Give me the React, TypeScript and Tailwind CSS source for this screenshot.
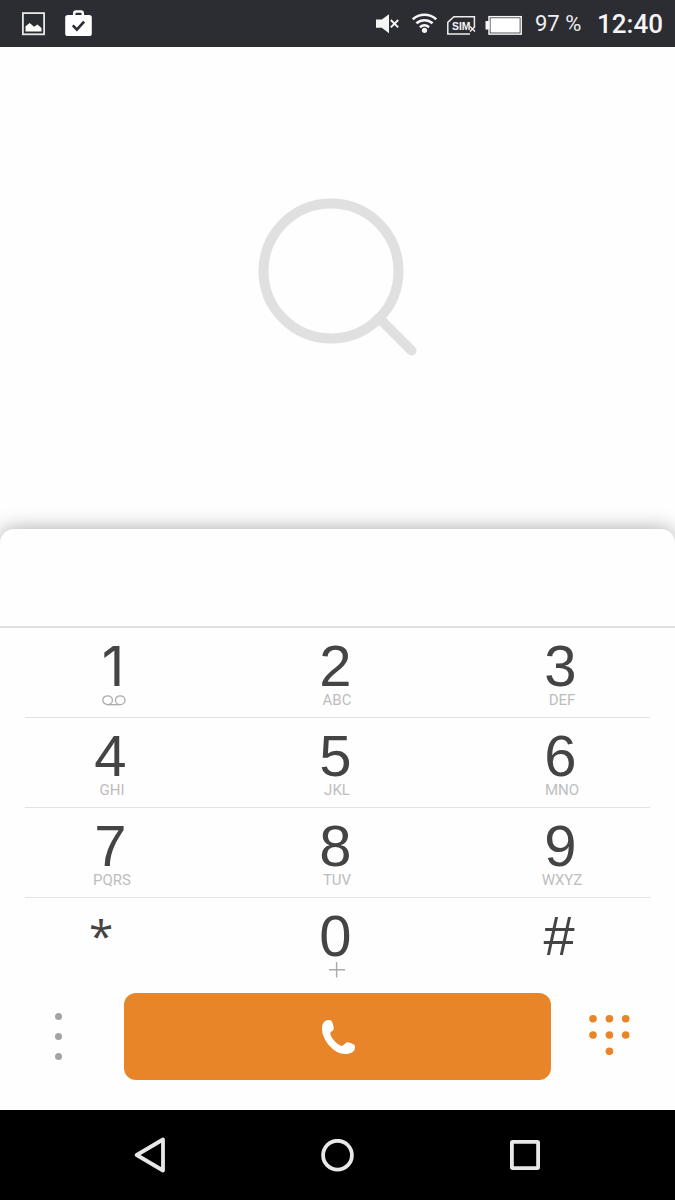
import React from 'react';

type Key = {
  digit: string;
  label?: string;
};

const rows: Key[][] = [
  [{ digit: '1' }, { digit: '2', label: 'ABC' }, { digit: '3', label: 'DEF' }],
  [{ digit: '4', label: 'GHI' }, { digit: '5', label: 'JKL' }, { digit: '6', label: 'MNO' }],
  [{ digit: '7', label: 'PQRS' }, { digit: '8', label: 'TUV' }, { digit: '9', label: 'WXYZ' }],
  [{ digit: '*' }, { digit: '0' }, { digit: '#' }],
];

const digitStyle = (digit: string) => {
  if (digit === '*') return "mr-[23px] font-['Open_Sans',sans-serif] text-[44px] leading-[50px] font-medium";
  if (digit === '#') return "mr-[7px] font-['Liberation_Sans',sans-serif] text-[56px] leading-[52px]";
  if (digit === '1') return 'ml-px font-[Inter,sans-serif] text-[55.5px] leading-[52px] font-normal';
  return "mr-1 font-['Liberation_Sans',sans-serif] text-[58px] leading-[51px]";
};

const StatusBar: React.FC = () => (
  <header className="flex h-[47px] items-center bg-[#2c2c33] pr-3 text-white">
    <svg className="ml-[22px] h-[47px] w-[23px]" viewBox="0 0 23 47" fill="none">
      <rect x="0.9" y="13.1" width="21.2" height="21.2" stroke="#e8e8e8" strokeWidth="1.8" />
      <path d="M3.5 31.5v-5.2l4.2-3.3 4.3 3.8 3.4-2.2 4.1 3.3v3.6z" fill="#fff" />
    </svg>
    <svg className="ml-5 h-[47px] w-[27px]" viewBox="0 0 27 47" fill="none">
      <path d="M9.2 16v-2.6a2 2 0 0 1 2-2h4.6a2 2 0 0 1 2 2V16" stroke="#fff" strokeWidth="2.5" />
      <rect x="0.2" y="15" width="26.6" height="21" rx="2.6" fill="#fff" />
      <path d="M7.8 25.4l4.1 4.2 7.2-8" stroke="#2c2c33" strokeWidth="2.7" />
    </svg>
    <div className="grow" />
    <svg className="h-[47px] w-[23px]" viewBox="0 0 23 47" fill="none">
      <path d="M0 19.5h5.8l7.2-5.3v19l-7.2-5.4H0z" fill="#f5f5f5" />
      <path d="M14.8 20l7.4 7.4M22.2 20l-7.4 7.4" stroke="#f5f5f5" strokeWidth="1.9" />
    </svg>
    <svg className="ml-[13px] h-[47px] w-[25px]" viewBox="0 0 25 47" fill="none" stroke="#f5f5f5" strokeWidth="2.5">
      <path d="M0.8 19.3c6.6-6 16.8-6 23.4 0" />
      <path d="M4.4 23.3c4.7-4.2 11.5-4.2 16.2 0" />
      <path d="M7.9 27.2c2.8-2.4 6.4-2.4 9.2 0" />
      <circle cx="12.5" cy="30.3" r="2.6" fill="#f5f5f5" stroke="none" />
    </svg>
    <svg className="ml-2.5 h-[47px] w-[29px]" viewBox="0 0 29 47" fill="none">
      <path d="M27.4 27V16.7H6.9L0.8 22.4v11.7H23" stroke="#eee" strokeWidth="1.5" />
      <text x="5" y="30" fill="#f5f5f5" fontFamily="Liberation Sans, sans-serif" fontSize="11.5" fontWeight="bold" textLength="18.5" lengthAdjust="spacingAndGlyphs">SIM</text>
      <path d="M23 26.5l5 5M28 26.5l-5 5" stroke="#f5f5f5" strokeWidth="1.4" />
    </svg>
    <svg className="ml-[9px] h-[47px] w-[37px]" viewBox="0 0 37 47" fill="none">
      <path d="M0.5 21h4v8.5h-4z" fill="#f5f5f5" />
      <rect x="4" y="16.7" width="32.2" height="17.4" stroke="#f5f5f5" strokeWidth="1.5" />
      <rect x="5.5" y="18.2" width="29.2" height="14.4" fill="#fff" />
    </svg>
    <span className="ml-[13px] w-[50px] whitespace-nowrap text-[22px] leading-[47px] text-[#eee]">97 %</span>
    <span className="ml-3 w-[66px] whitespace-nowrap text-[26px] font-medium leading-[50px] text-[#f5f5f5]">12:40</span>
  </header>
);

const KeyButton: React.FC<{ item: Key }> = ({ item }) => (
  <button className="flex h-[89px] w-[225px] flex-col items-center pt-3">
    <span className={`h-[52px] text-[#444] ${digitStyle(item.digit)}`}>{item.digit}</span>
    {item.label && <span className="mr-px h-4 text-[15px] leading-4 text-[#bdbdbd]">{item.label}</span>}
    {item.digit === '1' && (
      <svg className="ml-[3px] mt-[3px] h-[11px] w-6" viewBox="0 0 24 11" fill="none" stroke="#aaa" strokeWidth="1.3">
        <ellipse cx="5.6" cy="5.2" rx="4.8" ry="4.4" />
        <ellipse cx="18.2" cy="5.2" rx="4.8" ry="4.4" />
        <path d="M5.6 9.7h12.6" />
      </svg>
    )}
    {item.digit === '0' && (
      <svg className="mr-0.5 h-4 w-4" viewBox="0 0 16 16" stroke="#aaa" strokeWidth="1.4">
        <path d="M0 7.7h16M7.6 0v15.5" />
      </svg>
    )}
  </button>
);

const App: React.FC = () => {
  return (
    <div className="flex h-[1200px] w-[675px] flex-col overflow-hidden bg-[#fefefe] font-[Roboto,sans-serif]">
      <StatusBar />

      {/* Empty search results */}
      <main className="flex h-[482px] shrink-0 justify-center pt-[150px]">
        <svg className="h-40 w-40" viewBox="0 0 160 160" fill="none" stroke="#e0e0e0" strokeWidth="10">
          <circle cx="73" cy="73.9" r="67.5" />
          <path d="M121 121l32.5 32.5" strokeLinecap="round" />
        </svg>
      </main>

      {/* Dialpad sheet */}
      <section className="flex h-[581px] shrink-0 flex-col rounded-t-[14px] bg-[#fefefe] shadow-[0_0_20px_rgba(0,0,0,0.34)]">
        <div className="h-[99px] border-b-2 border-[#e0e0e0]" />
        <div>
          {rows.map((row, idx) => (
            <div key={idx}>
              <div className="flex">
                {row.map((item) => (
                  <KeyButton key={item.digit} item={item} />
                ))}
              </div>
              {idx < 3 && <div className="mx-[25px] h-px bg-[#e2e2e2]" />}
            </div>
          ))}
        </div>
        <div className="mt-[5.5px] flex h-[87px] items-start">
          <button className="ml-[55px] mt-5 flex w-[7px] flex-col gap-[13px]">
            <span className="size-[7px] rounded-full bg-[#a3a3a3]" />
            <span className="size-[7px] rounded-full bg-[#a3a3a3]" />
            <span className="size-[7px] rounded-full bg-[#a3a3a3]" />
          </button>
          <button className="ml-[62px] flex h-[87px] w-[427px] items-center justify-center rounded-xl bg-[#e88528]">
            <svg className="ml-0.5 mt-0.5 h-[34px] w-[33px]" viewBox="0 0 33 34" fill="#fff">
              <path d="M6.5 0C2.5 0 0 3.5 0 8.5 0 20 11.5 34 23.5 34c5.5 0 9.5-2.5 9.5-6.8 0-1.2-.3-2-1.2-2.6-1.9-1.3-4.3-2.4-6.5-2.4-2 0-2.8 2.9-5.6 3.7C15.5 25 8.5 17.5 8.2 13.2c.6-1.8 3.5-2.2 3.5-4.4C11.7 6.5 11 3.5 9.8 1.3 9.2.3 7.8 0 6.5 0z" />
            </svg>
          </button>
          <svg className="ml-[37px] mt-5 h-[42px] w-[43px]" viewBox="0 0 43 42" fill="#e88528">
            <circle cx="5" cy="5.7" r="3.8" />
            <circle cx="21.4" cy="5.7" r="3.8" />
            <circle cx="37.7" cy="5.7" r="3.8" />
            <circle cx="5" cy="22" r="3.8" />
            <circle cx="21.4" cy="22" r="3.8" />
            <circle cx="37.7" cy="22" r="3.8" />
            <circle cx="21.4" cy="38.3" r="3.8" />
          </svg>
        </div>
      </section>

      {/* System navigation */}
      <nav className="flex h-[90px] shrink-0 items-center bg-black">
        <svg className="ml-[134px] h-9 w-8" viewBox="0 0 32 36" fill="none" stroke="#e8e8e8" strokeWidth="3.8" strokeLinejoin="round">
          <path d="M29 2.5v31L2.7 18z" />
        </svg>
        <svg className="ml-[155px] size-[33px]" viewBox="0 0 33 33" fill="none" stroke="#e8e8e8" strokeWidth="3.8">
          <circle cx="16.5" cy="16.2" r="14.4" />
        </svg>
        <svg className="ml-[156px] size-[30px]" viewBox="0 0 30 30" fill="none" stroke="#e8e8e8" strokeWidth="3.8">
          <rect x="1.9" y="1.9" width="26.2" height="26.2" rx="0.8" />
        </svg>
      </nav>
    </div>
  );
};

export default App;
